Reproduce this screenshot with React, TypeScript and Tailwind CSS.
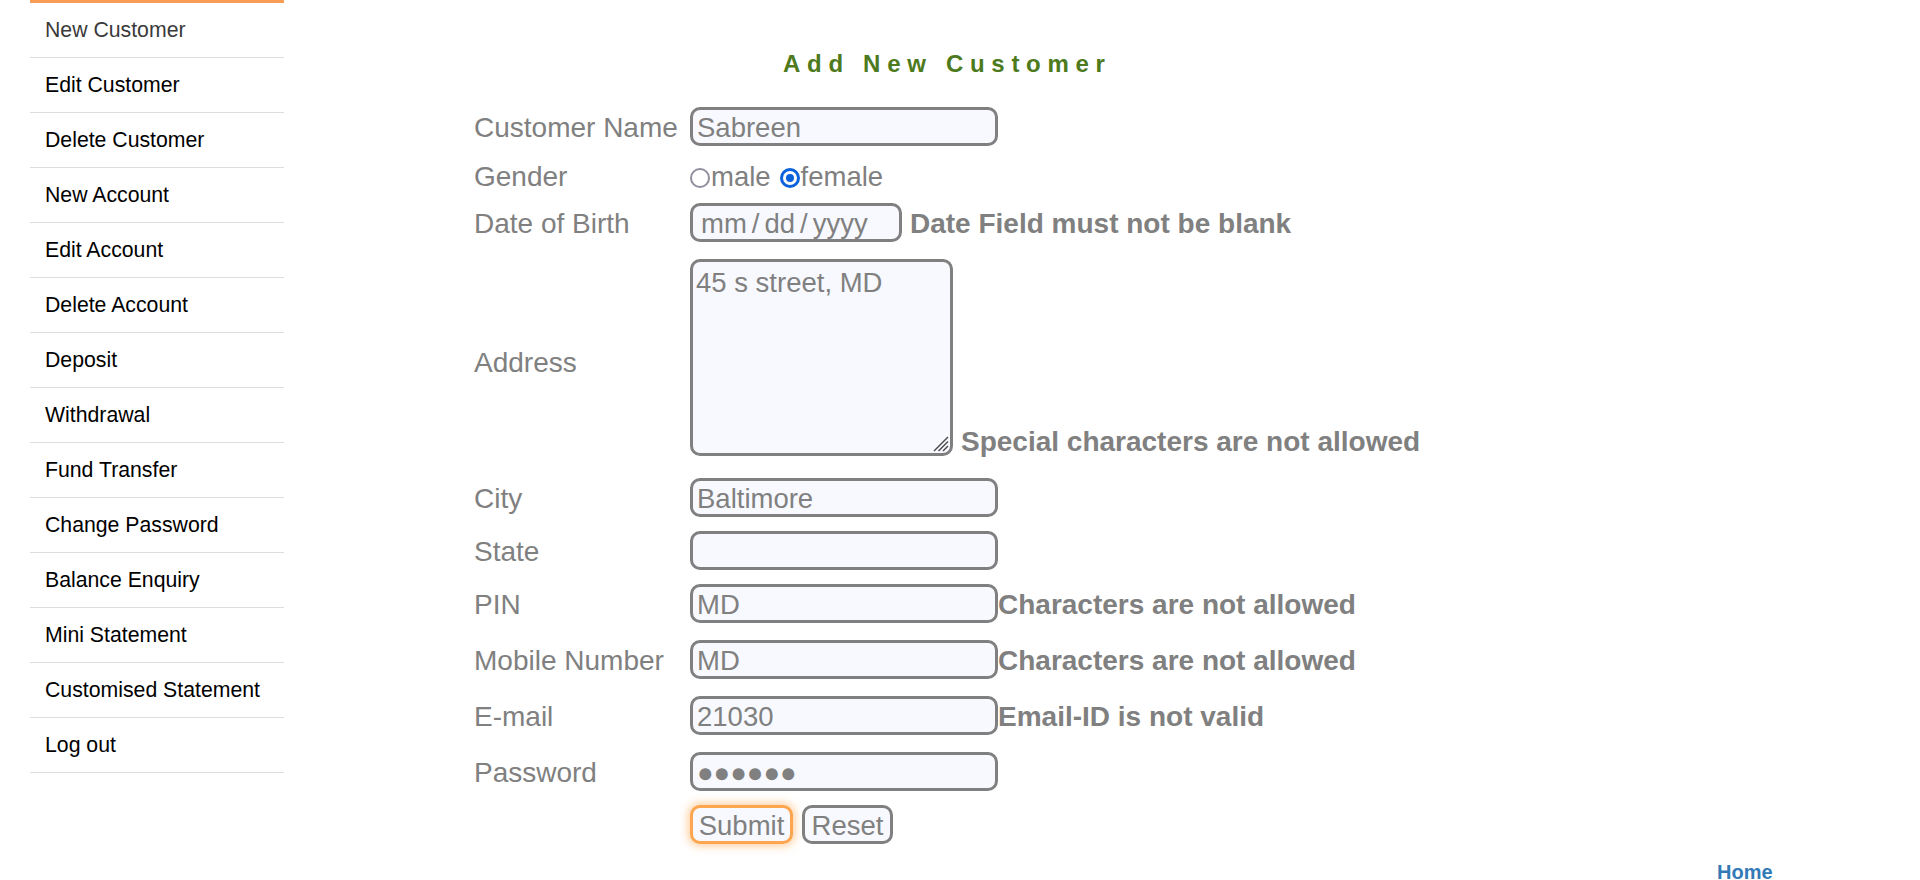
import React from "react";

const menu = [
  "New Customer",
  "Edit Customer",
  "Delete Customer",
  "New Account",
  "Edit Account",
  "Delete Account",
  "Deposit",
  "Withdrawal",
  "Fund Transfer",
  "Change Password",
  "Balance Enquiry",
  "Mini Statement",
  "Customised Statement",
  "Log out",
];

const box =
  "h-[39px] border-[3px] border-[#808080] rounded-[10px] bg-[#f8f9fe] px-[4px] pt-[3px] flex items-center text-[#808080] text-[27.5px] leading-none whitespace-nowrap";

function Err({ children, cls = "" }: { children: React.ReactNode; cls?: string }) {
  return (
    <span className={"text-[28px] font-bold text-[#808080] whitespace-nowrap leading-[32px] pt-[3px] " + cls}>
      {children}
    </span>
  );
}

function Row({
  h,
  label,
  children,
  valueCls = "items-center",
  labelCls = "pt-[3px]",
}: {
  h: string;
  label?: string;
  children: React.ReactNode;
  valueCls?: string;
  labelCls?: string;
}) {
  return (
    <div className={"flex " + h}>
      <div
        className={
          "w-[216px] shrink-0 flex items-center text-[28px] text-[#808080] leading-[32px] whitespace-nowrap " +
          labelCls
        }
      >
        {label}
      </div>
      <div className={"flex " + valueCls}>{children}</div>
    </div>
  );
}

export default function App() {
  return (
    <div className="flex min-h-[880px] bg-white font-['Liberation_Sans',Arial,sans-serif]">
      <aside className="ml-[30px] w-[254px] shrink-0">
        <div className="h-[3px] bg-[#f89c56]" />
        {menu.map((m, i) => (
          <div
            key={m}
            className={
              "h-[55px] border-b border-[#dddddd] flex items-center pl-[15px] pt-[1px] text-[21.25px] leading-none " +
              (i === 0 ? "text-[#3a3a3a]" : "text-black")
            }
          >
            {m}
          </div>
        ))}
      </aside>

      <main className="ml-[190px] flex flex-col">
        <div className="mt-[44px] h-[40px] flex items-center pl-[309px]">
          <span className="text-[24px] font-bold tracking-[6.7px] text-[#4d7a1c] leading-none whitespace-nowrap">
            Add New Customer
          </span>
        </div>

        <div className="mt-[19px] flex flex-col">
          <Row h="h-[47px]" label="Customer Name">
            <div className={box + " w-[308px]"}>Sabreen</div>
          </Row>

          <Row h="h-[50px]" label="Gender">
            <div className="flex items-center text-[27.5px] text-[#808080] leading-none pt-[3px]">
              <span className="block shrink-0 w-[20px] h-[20px] min-w-[20px] rounded-full border-[2px] border-[#8f8f9d] bg-white mr-[1px] mt-[2px]" />
              <span>male</span>
              <span className="shrink-0 ml-[9px] w-[20px] h-[20px] min-w-[20px] rounded-full border-[3px] border-[#0b63dc] bg-white flex items-center justify-center mr-[1px] mt-[2px]">
                <span className="w-[8px] h-[8px] rounded-full bg-[#0b63dc]" />
              </span>
              <span>female</span>
            </div>
          </Row>

          <Row h="h-[45px]" label="Date of Birth">
            <div className={box + " w-[212px] pl-[8px]"}>
              mm<span className="mx-[5px]">/</span>dd<span className="mx-[5px]">/</span>yyyy
            </div>
            <Err cls="ml-[8px]">Date Field must not be blank</Err>
          </Row>

          <Row h="h-[225px]" label="Address" valueCls="items-end pb-[14px]" labelCls="pt-[10px]">
            <div className="relative w-[263px] h-[197px] border-[3px] border-[#808080] rounded-[10px] bg-[#f8f9fe] px-[3px] pt-[5px] text-[27.5px] text-[#808080] leading-[32px]">
              45 s street, MD
              <svg
                className="absolute right-[1px] bottom-[1px]"
                width="18"
                height="18"
                viewBox="0 0 18 18"
              >
                <line x1="17" y1="3" x2="3" y2="17" stroke="#4a4a4a" strokeWidth="1.5" />
                <line x1="17" y1="7.5" x2="7.5" y2="17" stroke="#4a4a4a" strokeWidth="1.5" />
                <line x1="17" y1="12" x2="12" y2="17" stroke="#4a4a4a" strokeWidth="1.5" />
              </svg>
            </div>
            <Err cls="ml-[8px] mb-[-2px]">Special characters are not allowed</Err>
          </Row>

          <Row h="h-[54px]" label="City">
            <div className={box + " w-[308px]"}>Baltimore</div>
          </Row>

          <Row h="h-[53px]" label="State">
            <div className={box + " w-[308px]"} />
          </Row>

          <Row h="h-[52px]" label="PIN">
            <div className={box + " w-[308px]"}>MD</div>
            <Err>Characters are not allowed</Err>
          </Row>

          <Row h="h-[60px]" label="Mobile Number">
            <div className={box + " w-[308px]"}>MD</div>
            <Err>Characters are not allowed</Err>
          </Row>

          <Row h="h-[52px]" label="E-mail">
            <div className={box + " w-[308px]"}>21030</div>
            <Err>Email-ID is not valid</Err>
          </Row>

          <Row h="h-[60px]" label="Password">
            <div className={box + " w-[308px] text-[#7a7a7a] text-[26px] pt-[1px]"}>
              ●●●●●●
            </div>
          </Row>

          <Row h="h-[47px]">
            <div className="flex items-center gap-[9px]">
              <div className="h-[39px] w-[103px] border-[3px] border-[#fda64f] rounded-[10px] bg-[#f8f9fe] pt-[3px] flex items-center justify-center text-[27.5px] text-[#808080] leading-none shadow-[0_0_8px_2px_rgba(255,166,77,0.55)]">
                Submit
              </div>
              <div className="h-[39px] w-[91px] border-[3px] border-[#808080] rounded-[10px] bg-[#f8f9fe] pt-[3px] flex items-center justify-center text-[27.5px] text-[#808080] leading-none">
                Reset
              </div>
            </div>
          </Row>
        </div>

        <div className="mt-[13px] pl-[1243px] h-[23px]">
          <a className="text-[20px] font-bold text-[#337ab7] leading-[23px] whitespace-nowrap">Home</a>
        </div>
      </main>
    </div>
  );
}
